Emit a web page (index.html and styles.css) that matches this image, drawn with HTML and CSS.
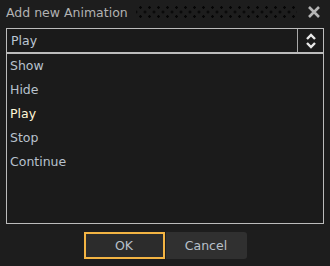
FILE: index.html
```html
<!DOCTYPE html>
<html lang="en">

<head>
    <meta charset="UTF-8">
    <meta name="viewport" content="width=device-width, initial-scale=1.0">
    <link rel="stylesheet" href="styles.css">
</head>

<body>
    <div class="dialog">
        <div class="titlebar">
            <span class="title">Add new Animation</span>
            <div class="grip"></div>
            <div class="close">
                <svg width="14" height="12" viewBox="0 0 14 12">
                    <path d="M2 1 L12 11 M12 1 L2 11" stroke="#b4b4b4" stroke-width="2.6" fill="none"/>
                </svg>
            </div>
        </div>

        <div class="combo">
            <span class="combo-value">Play</span>
            <div class="combo-arrow">
                <svg width="12" height="18" viewBox="0 0 12 18">
                    <path d="M2 7 L6 3 L10 7 M2 11 L6 15 L10 11" stroke="#e8e8e8" stroke-width="2.4" fill="none"/>
                </svg>
            </div>
        </div>

        <ul class="list">
            <li>Show</li>
            <li>Hide</li>
            <li class="selected">Play</li>
            <li>Stop</li>
            <li>Continue</li>
        </ul>

        <div class="buttons">
            <button class="btn ok">OK</button>
            <button class="btn cancel">Cancel</button>
        </div>
    </div>
</body>

</html>
```

FILE: styles.css
```css
* {
    box-sizing: border-box;
    margin: 0;
    padding: 0;
    font-family: "DejaVu Sans", Verdana, sans-serif;
}

body {
    background-color: #1d1d1d;
    width: 330px;
    height: 266px;
    overflow: hidden;
}

.dialog {
    display: flex;
    flex-direction: column;
    height: 266px;
}

.titlebar {
    display: flex;
    align-items: center;
    height: 28px;
    padding: 0 9px 4px 6px;
}

.title {
    color: #b2b2b2;
    font-size: 12.5px;
    white-space: nowrap;
}

.grip {
    flex: 1;
    height: 13px;
    margin: 0 10px 0 8px;
    background-image:
        radial-gradient(circle, #050505 1.1px, transparent 1.5px),
        radial-gradient(circle, #050505 1.1px, transparent 1.5px);
    background-size: 9px 9px;
    background-position: 0 -3px, 4.5px 1.5px;
}

.close {
    display: flex;
    width: 14px;
    height: 12px;
}

.combo {
    display: flex;
    align-items: stretch;
    height: 24px;
    margin: 0 6px;
    border: 1px solid #bcbcbc;
    border-bottom: none;
    background-color: #1a1a1a;
}

.combo-value {
    flex: 1;
    display: flex;
    align-items: center;
    padding-left: 4px;
    color: #bcc6d2;
    font-size: 12.5px;
}

.combo-arrow {
    width: 26px;
    display: flex;
    justify-content: center;
    align-items: center;
    border-left: 1px solid #a8a8a8;
}

.list {
    list-style: none;
    height: 172px;
    margin: 0 6px;
    border: 1px solid #bcbcbc;
    border-top-width: 2px;
    padding: 0 3px;
    background-color: #1b1b1b;
}

.list li {
    height: 24px;
    line-height: 24px;
    color: #b8c2ce;
    font-size: 12.5px;
}

.list li.selected {
    color: #fff6d6;
}

.buttons {
    display: flex;
    justify-content: center;
    gap: 1px;
    margin-top: 8px;
}

.btn {
    width: 81px;
    height: 27px;
    border: none;
    background-color: #2e2e2e;
    color: #b8c0ca;
    font-size: 12.5px;
    font-family: "DejaVu Sans", Verdana, sans-serif;
}

.btn.ok {
    border: 2px solid #f3b443;
    background-color: #2c2c2c;
}

.btn.cancel {
    border-radius: 0 3px 3px 0;
    background-color: #303030;
}
```
